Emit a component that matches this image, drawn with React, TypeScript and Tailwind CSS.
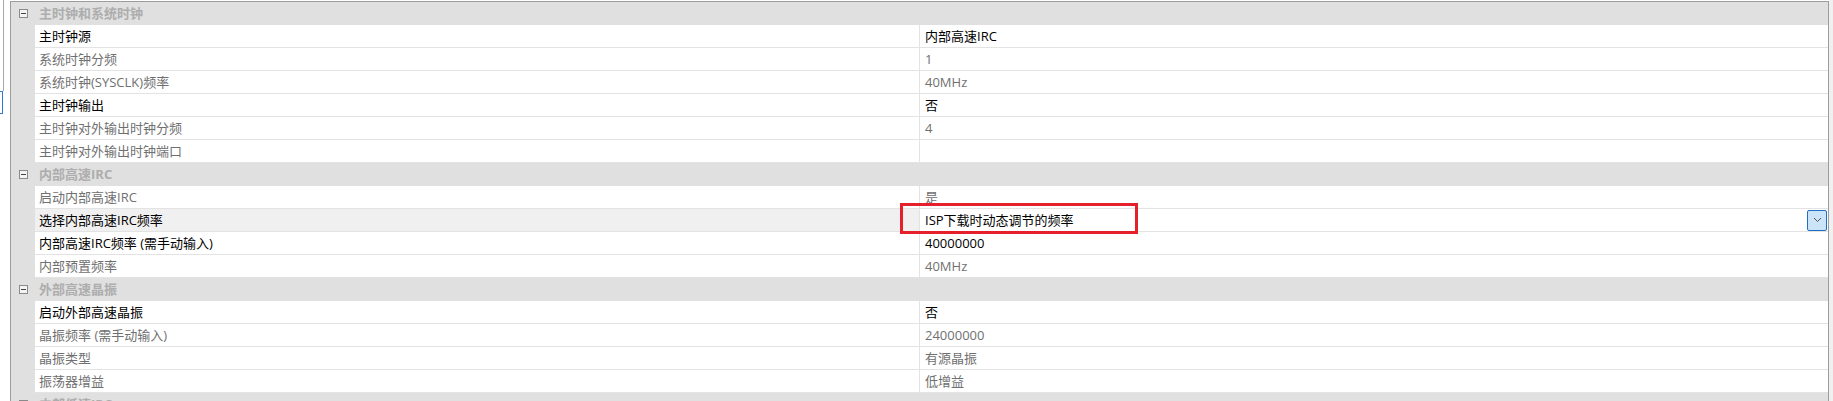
import React from "react";

type Row =
  | { kind: "group"; label: string }
  | {
      kind: "item";
      name: string;
      value: string;
      dim?: boolean;
      selected?: boolean;
      dropdown?: boolean;
    };

const rows: Row[] = [
  { kind: "group", label: "主时钟和系统时钟" },
  { kind: "item", name: "主时钟源", value: "内部高速IRC" },
  { kind: "item", name: "系统时钟分频", value: "1", dim: true },
  { kind: "item", name: "系统时钟(SYSCLK)频率", value: "40MHz", dim: true },
  { kind: "item", name: "主时钟输出", value: "否" },
  { kind: "item", name: "主时钟对外输出时钟分频", value: "4", dim: true },
  { kind: "item", name: "主时钟对外输出时钟端口", value: "", dim: true },
  { kind: "group", label: "内部高速IRC" },
  { kind: "item", name: "启动内部高速IRC", value: "是", dim: true },
  {
    kind: "item",
    name: "选择内部高速IRC频率",
    value: "ISP下载时动态调节的频率",
    selected: true,
    dropdown: true,
  },
  { kind: "item", name: "内部高速IRC频率 (需手动输入)", value: "40000000" },
  { kind: "item", name: "内部预置频率", value: "40MHz", dim: true },
  { kind: "group", label: "外部高速晶振" },
  { kind: "item", name: "启动外部高速晶振", value: "否" },
  { kind: "item", name: "晶振频率 (需手动输入)", value: "24000000", dim: true },
  { kind: "item", name: "晶振类型", value: "有源晶振", dim: true },
  { kind: "item", name: "振荡器增益", value: "低增益", dim: true },
  { kind: "group", label: "内部低速IRC" },
];

const CollapseIcon = () => (
  <svg width="9" height="9" viewBox="0 0 9 9">
    <rect x="0.5" y="0.5" width="8" height="8" fill="#f4f4f4" stroke="#8a8a8a" />
    <path d="M2 4.5 H7" stroke="#444" strokeWidth="1" />
  </svg>
);

const GroupRow = ({ label }: { label: string }) => (
  <div className="flex h-[23px] items-center bg-[#e0e0e0]">
    <div className="w-[24px] shrink-0 flex items-center pl-[8px]">
      <CollapseIcon />
    </div>
    <span className="pl-[4px] font-bold text-[#adadad]">{label}</span>
  </div>
);

const ItemRow = ({ row }: { row: Extract<Row, { kind: "item" }> }) => {
  const tone = row.dim ? "text-[#707070]" : "text-black";
  return (
    <div className="flex h-[23px]">
      <div className="w-[24px] shrink-0 bg-[#e0e0e0]" />
      <div
        className={`w-[884px] shrink-0 flex items-center pl-[4px] border-b border-[#e3e3e3] ${tone} ${
          row.selected ? "bg-[#f0f0f0]" : "bg-white"
        }`}
      >
        {row.name}
      </div>
      <div
        className={`flex-1 flex items-center justify-between pl-[5px] bg-white border-l border-b border-[#e3e3e3] ${tone}`}
      >
        <span>{row.value}</span>
        {row.dropdown && (
          <div className="mr-px w-[20px] h-[21px] flex items-center justify-center bg-[#cce4f7] border border-[#1f6fc4] rounded-[2px]">
            <svg width="9" height="6" viewBox="0 0 9 6">
              <path d="M1 1 L4.5 4.5 L8 1" fill="none" stroke="#555" strokeWidth="1" />
            </svg>
          </div>
        )}
      </div>
    </div>
  );
};

export default function App() {
  return (
    <div className="relative w-[1833px] h-[401px] overflow-hidden bg-white flex text-[13px] leading-none font-['Open_Sans','Noto_Sans_CJK_SC',sans-serif]">
      {/* left edge of the neighbouring pane */}
      <div className="w-[10px] shrink-0 flex flex-col">
        <div className="ml-[3px] w-px h-[91px] bg-[#a8a8a8]" />
        <div className="w-[3px] h-[23px] border border-l-0 border-[#2b7bd1] bg-white" />
      </div>

      {/* property grid */}
      <div className="w-[1819px] shrink-0 mt-px border-t border-l border-r border-[#9c9c9c] bg-[#e0e0e0]">
        {rows.map((row, i) =>
          row.kind === "group" ? (
            <GroupRow key={i} label={row.label} />
          ) : (
            <ItemRow key={i} row={row} />
          )
        )}
      </div>

      <div className="flex-1 bg-[#f0f0f0]" />

      {/* annotation */}
      <div className="absolute left-[900px] top-[203px] w-[238px] h-[31px] border-[3px] border-[#e5202a]" />
    </div>
  );
}
